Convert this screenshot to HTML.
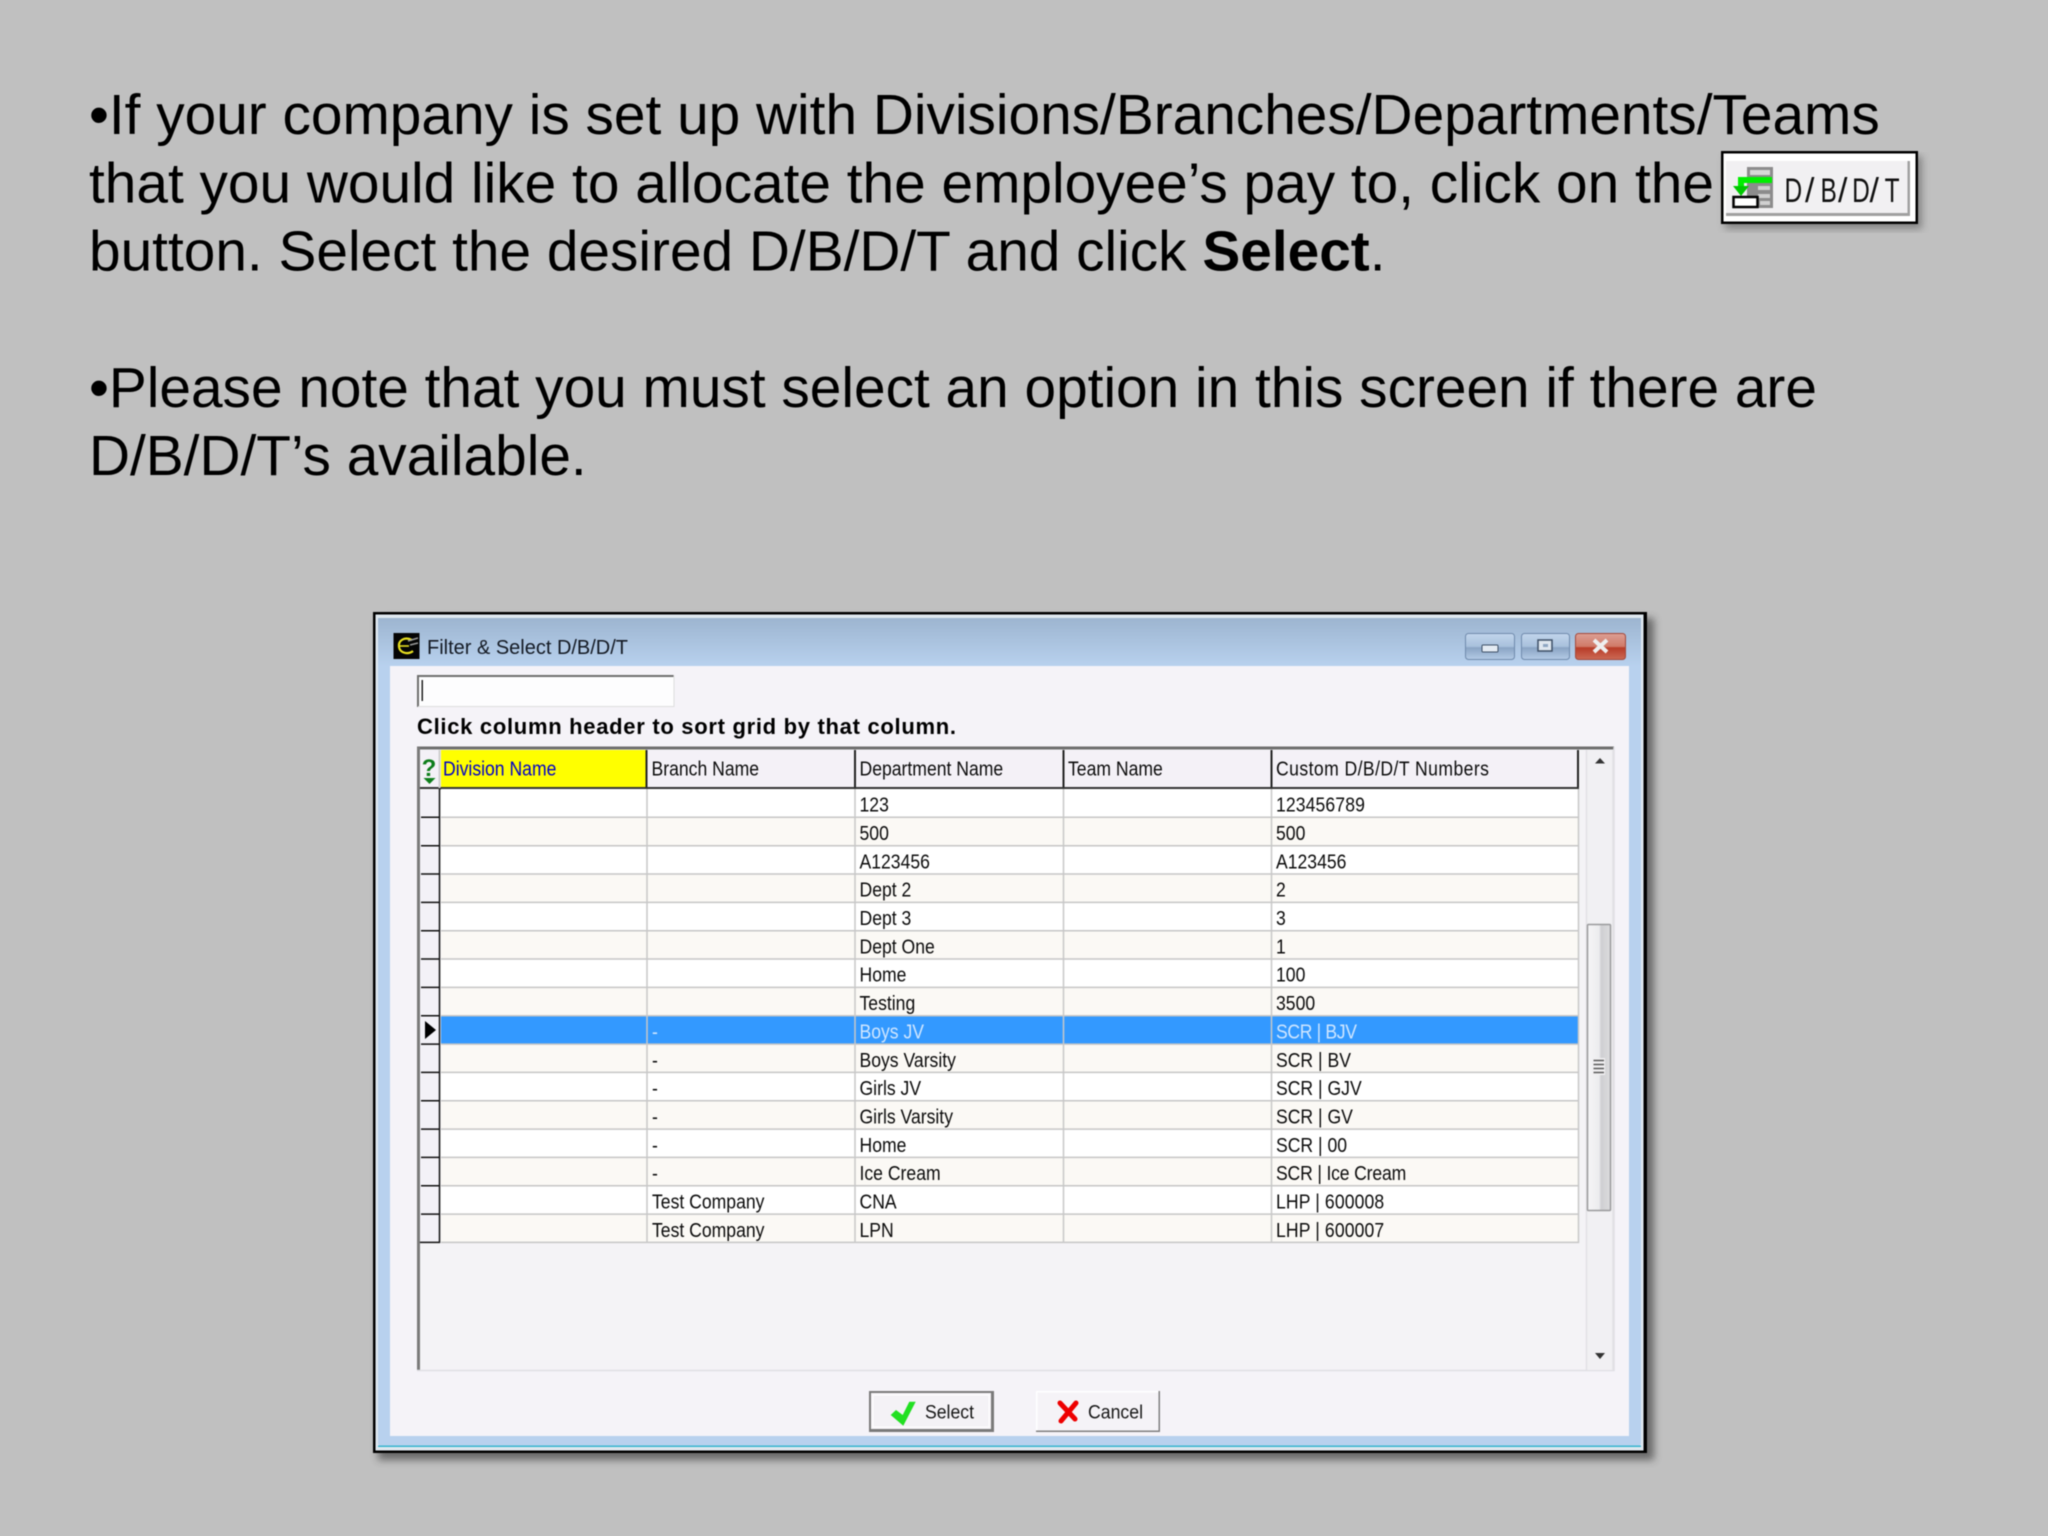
<!DOCTYPE html>
<html><head><meta charset="utf-8"><title>Filter and Select D/B/D/T</title>
<style>
html,body{margin:0;padding:0;background:#c0c0c0;width:2048px;height:1536px;overflow:hidden}
svg{display:block;filter:blur(.4px)}
text{font-family:"Liberation Sans",sans-serif;white-space:pre}
.m{font-size:56.8px;fill:#000}
.g text{font-size:20px;fill:#0c0c0c}
</style></head><body>
<svg width="2048" height="1536" viewBox="0 0 2048 1536" xmlns="http://www.w3.org/2000/svg">
<defs>
<linearGradient id="tb" x1="0" y1="0" x2="0" y2="1"><stop offset="0" stop-color="#9db5d0"/><stop offset="1" stop-color="#b8d1ee"/></linearGradient>
<linearGradient id="bb" x1="0" y1="0" x2="0" y2="1"><stop offset="0" stop-color="#c3d6ec"/><stop offset=".5" stop-color="#a8c0dc"/><stop offset=".55" stop-color="#8aa4c4"/><stop offset="1" stop-color="#b4cbe6"/></linearGradient>
<linearGradient id="rb" x1="0" y1="0" x2="0" y2="1"><stop offset="0" stop-color="#dc9f95"/><stop offset=".5" stop-color="#d07a68"/><stop offset=".55" stop-color="#b83c28"/><stop offset="1" stop-color="#cc6a55"/></linearGradient>
<linearGradient id="th" x1="0" y1="0" x2="1" y2="0"><stop offset="0" stop-color="#f6f5f7"/><stop offset=".5" stop-color="#ececee"/><stop offset=".6" stop-color="#cfcfd2"/><stop offset="1" stop-color="#dcdcde"/></linearGradient>
<filter id="sh" x="-5%" y="-5%" width="110%" height="110%"><feGaussianBlur stdDeviation="4"/></filter>
</defs>
<rect width="2048" height="1536" fill="#c0c0c0"/>

<text class="m" x="89" y="134">•If your company is set up with Divisions/Branches/Departments/Teams</text>
<text class="m" x="89" y="202.300">that you would like to allocate the employee’s pay to, click on the</text>
<text class="m" x="89" y="270.500">button. Select the desired D/B/D/T and click <tspan font-weight="bold">Select</tspan>.</text>
<text class="m" x="89" y="407">•Please note that you must select an option in this screen if there are</text>
<text class="m" x="89" y="475">D/B/D/T’s available.</text>

<!-- D/B/D/T button -->
<rect x="1725" y="156" width="197" height="73" fill="#555" opacity=".55" filter="url(#sh)"/>
<rect x="1721" y="151" width="197" height="73" fill="#000"/>
<rect x="1723.500" y="153.500" width="192" height="68" fill="#fff"/>
<rect x="1726" y="161" width="184" height="55" fill="#a0a0a0"/>
<rect x="1726" y="161" width="181.500" height="52" fill="#f1f0f2"/>
<rect x="1747" y="167" width="26" height="41" fill="#8c8c8c"/>
<rect x="1750" y="170" width="20" height="5" fill="#d8d8d8"/>
<rect x="1758" y="186" width="12" height="4" fill="#d0d0d0"/>
<rect x="1758" y="194" width="12" height="4" fill="#d0d0d0"/>
<rect x="1760" y="201" width="10" height="4" fill="#d0d0d0"/>
<path d="M1772 180H1741V188" fill="none" stroke="#00ee00" stroke-width="6"/>
<path d="M1733 186H1749L1741 196Z" fill="#00c800"/>
<rect x="1733.500" y="197" width="24" height="10" fill="#fff" stroke="#000" stroke-width="2.500"/>
<g transform="translate(1784.500,0) scale(.72,1)"><text x="0 50 94 139" y="202" font-size="34" fill="#111">DBDT</text></g>
<text x="1805 1838 1869.500" y="202" font-size="34" fill="#111">///</text>

<!-- window -->
<rect x="378" y="618" width="1276" height="842" fill="#333" opacity=".6" filter="url(#sh)"/>
<rect x="373" y="612" width="1274" height="841" fill="#000"/>
<rect x="375.500" y="614.500" width="1268" height="836" fill="#dfe8ef"/>
<rect x="378" y="618" width="1263" height="829" rx="4" fill="#b8d1ee"/>
<rect x="378" y="618" width="1263" height="48" fill="url(#tb)"/>
<rect x="378" y="1445.500" width="1263" height="1.500" fill="#39b5cf"/>
<rect x="390" y="666" width="1239" height="770" fill="#f5f3f8"/>

<!-- title bar -->
<rect x="393.500" y="633" width="26" height="26" fill="#050505"/>
<path d="M412 640C404 636 398 641 399 647C400 653 408 655 413 651" fill="none" stroke="#e8e020" stroke-width="2.200"/>
<path d="M399 646H409" stroke="#e8e020" stroke-width="1.600"/>
<path d="M408 641L418 638M410 645L418 643" stroke="#9a9a9a" stroke-width="1.500"/>
<text x="427" y="654" font-size="20" fill="#141a24" textLength="201" lengthAdjust="spacingAndGlyphs">Filter &amp; Select D/B/D/T</text>

<rect x="1465.500" y="633.500" width="49" height="26" rx="3" fill="url(#bb)" stroke="#6f8aac"/>
<rect x="1482" y="645" width="16" height="7" rx="1" fill="#e4ebf3" stroke="#3d4f66" stroke-width="1"/>
<rect x="1521.500" y="633.500" width="48" height="26" rx="3" fill="url(#bb)" stroke="#6f8aac"/>
<rect x="1538" y="640" width="14" height="11" fill="#dfe7f0" stroke="#3d4f66" stroke-width="1.500"/>
<rect x="1543" y="644" width="5" height="3" fill="#8ea6c2"/>
<rect x="1575.500" y="633.500" width="50" height="26" rx="3" fill="url(#rb)" stroke="#a4483a"/>
<path d="M1594 640L1607 652M1607 640L1594 652" stroke="#eeeeee" stroke-width="4"/>

<!-- input and label -->
<rect x="417" y="675" width="257" height="32" fill="#fdfdfe"/>
<path d="M417 676H674M418 675V707" stroke="#6e6e6e" stroke-width="2"/>
<path d="M418 706.500H674V675" fill="none" stroke="#dedede" stroke-width="1"/>
<rect x="421.500" y="680" width="1.500" height="21" fill="#222"/>
<text x="417" y="734" font-size="22" font-weight="bold" fill="#000" textLength="539" lengthAdjust="spacing">Click column header to sort grid by that column.</text>

<!-- grid frame -->
<rect x="417" y="747" width="1197" height="624" fill="#f4f3f6"/>
<rect x="417" y="746.500" width="1197" height="3" fill="#6e6e6e"/>
<rect x="417" y="747" width="3" height="624" fill="#7a7a7a"/>
<path d="M417 1370.500H1614V747" fill="none" stroke="#e0dfe4" stroke-width="1.500"/>

<!-- header -->
<rect x="420" y="750" width="1158" height="38" fill="#f4f1f7"/>
<rect x="441" y="750" width="205" height="38" fill="#ffff00"/>
<text x="429" y="776" text-anchor="middle" font-size="24" font-weight="bold" fill="#0d7d1a">?</text>
<path d="M423.500 778H435.500L429.500 784Z" fill="#0d7d1a"/>
<path d="M646.500 750V788M855 750V788M1063.500 750V788M1271.500 750V788M1578 750V789" stroke="#222" stroke-width="2"/>
<rect x="420" y="787" width="1159" height="2.500" fill="#333"/>
<path d="M439.500 750V788" stroke="#cfcfcf" stroke-width="2"/>

<!-- rows -->
<rect x="420" y="789" width="20" height="453" fill="#f3f1f7"/>
<rect x="441" y="789" width="1137" height="453" fill="#fff"/>
<g fill="#fbf9f5">
<rect x="441" y="817.300" width="1137" height="28.400"/>
<rect x="441" y="874" width="1137" height="28.400"/>
<rect x="441" y="930.700" width="1137" height="28.400"/>
<rect x="441" y="987.400" width="1137" height="28.400"/>
<rect x="441" y="1044.100" width="1137" height="28.400"/>
<rect x="441" y="1100.700" width="1137" height="28.400"/>
<rect x="441" y="1157.400" width="1137" height="28.400"/>
<rect x="441" y="1214.100" width="1137" height="28.400"/>
</g>
<rect x="441" y="1016.500" width="1137" height="27" fill="#3399ff"/>
<path d="M441 817.300H1579M441 845.700H1579M441 874H1579M441 902.400H1579M441 930.700H1579M441 959H1579M441 987.400H1579M441 1015.700H1579M441 1044.100H1579M441 1072.400H1579M441 1100.700H1579M441 1129.100H1579M441 1157.400H1579M441 1185.800H1579M441 1214.100H1579M441 1242.400H1579" stroke="#c6c6c6" stroke-width="1.500"/>
<path d="M647 789V1243M855 789V1243M1063.500 789V1243M1271.500 789V1243M1578.500 789V1243" stroke="#c8c8c8" stroke-width="1.500"/>
<path d="M421 817.300H439M421 845.700H439M421 874H439M421 902.400H439M421 930.700H439M421 959H439M421 987.400H439M421 1015.700H439M421 1044.100H439M421 1072.400H439M421 1100.700H439M421 1129.100H439M421 1157.400H439M421 1185.800H439M421 1214.100H439M420 1242.400H440" stroke="#111" stroke-width="1.500"/>
<path d="M439.500 789V1243" stroke="#111" stroke-width="1.500"/>
<path d="M425 1021V1039L436 1030Z" fill="#000"/>

<!-- grid text -->
<g class="g">
<g transform="translate(443,0) scale(.88,1)"><text y="775.500" style="fill:#0000c8">Division Name</text></g>
<g transform="translate(651.500,0) scale(.88,1)"><text y="775.500">Branch Name</text></g>
<g transform="translate(859.500,0) scale(.88,1)"><text y="775.500">Department Name</text></g>
<g transform="translate(1068,0) scale(.88,1)"><text y="775.500">Team Name</text></g>
<g transform="translate(1276,0) scale(.88,1)"><text y="775.500" textLength="242" lengthAdjust="spacing">Custom D/B/D/T Numbers</text></g>

<g transform="translate(652,0) scale(.88,1)">
<text y="1038.400" style="fill:#cfe6ff">-</text>
<text y="1066.800">-</text>
<text y="1095.100">-</text>
<text y="1123.400">-</text>
<text y="1151.800">-</text>
<text y="1180.100">-</text>
<text y="1208.500">Test Company</text>
<text y="1236.800">Test Company</text>
</g>
<g transform="translate(859.500,0) scale(.88,1)">
<text y="811.700">123</text>
<text y="840">500</text>
<text y="868.400">A123456</text>
<text y="896.700">Dept 2</text>
<text y="925.100">Dept 3</text>
<text y="953.400">Dept One</text>
<text y="981.700">Home</text>
<text y="1010.100">Testing</text>
<text y="1038.400" style="fill:#cfe6ff">Boys JV</text>
<text y="1066.800">Boys Varsity</text>
<text y="1095.100">Girls JV</text>
<text y="1123.400">Girls Varsity</text>
<text y="1151.800">Home</text>
<text y="1180.100">Ice Cream</text>
<text y="1208.500">CNA</text>
<text y="1236.800">LPN</text>
</g>
<g transform="translate(1276,0) scale(.88,1)">
<text y="811.700" textLength="101" lengthAdjust="spacing">123456789</text>
<text y="840">500</text>
<text y="868.400">A123456</text>
<text y="896.700">2</text>
<text y="925.100">3</text>
<text y="953.400">1</text>
<text y="981.700">100</text>
<text y="1010.100">3500</text>
<text y="1038.400" style="fill:#cfe6ff" textLength="92" lengthAdjust="spacing">SCR | BJV</text>
<text y="1066.800">SCR | BV</text>
<text y="1095.100">SCR | GJV</text>
<text y="1123.400">SCR | GV</text>
<text y="1151.800">SCR | 00</text>
<text y="1180.100" textLength="148" lengthAdjust="spacing">SCR | Ice Cream</text>
<text y="1208.500" textLength="123" lengthAdjust="spacing">LHP | 600008</text>
<text y="1236.800" textLength="123" lengthAdjust="spacing">LHP | 600007</text>
</g>
</g>

<!-- scrollbar -->
<rect x="1586" y="750" width="27" height="620" fill="#f1f0f3"/>
<path d="M1586.500 750V1370M1613 750V1370" stroke="#e2e1e5" stroke-width="1.500"/>
<path d="M1595 763.500H1605L1600 758Z" fill="#333"/>
<path d="M1595 1353H1605L1600 1359Z" fill="#333"/>
<rect x="1587.500" y="924.500" width="23" height="286" rx="1" fill="url(#th)" stroke="#9a9a9c" stroke-width="1.500"/>
<rect x="1592" y="1058" width="13" height="17" fill="#f0eff1"/>
<path d="M1593.500 1060.500H1604M1593.500 1064.500H1604M1593.500 1068.500H1604M1593.500 1072.500H1604" stroke="#5a5a5a" stroke-width="1.500"/>

<!-- buttons -->
<rect x="869" y="1391" width="125" height="41" fill="#7a7a7a"/>
<rect x="871" y="1393" width="120" height="36" fill="#f5f3f7"/>
<rect x="873" y="1395" width="116" height="32" fill="#f4f2f6" stroke="#fff" stroke-width="1"/>
<path d="M890.700 1415L903.300 1425.700L915.700 1401.700H909.300L902.700 1415L896 1410Z" fill="#22e022"/>
<text x="925" y="1418.500" font-size="19" fill="#151515" textLength="49" lengthAdjust="spacingAndGlyphs">Select</text>

<rect x="1036" y="1391" width="124" height="41" fill="#808080"/>
<rect x="1036" y="1391" width="122.500" height="39.500" fill="#fff"/>
<rect x="1037.500" y="1392.500" width="121" height="38" fill="#f5f3f7"/>
<path d="M1060 1403L1075 1419M1076 1403L1061 1421" stroke="#ee0000" stroke-width="5" stroke-linecap="round"/>
<text x="1088" y="1418.500" font-size="19" fill="#151515" textLength="55" lengthAdjust="spacingAndGlyphs">Cancel</text>
</svg>
</body></html>
